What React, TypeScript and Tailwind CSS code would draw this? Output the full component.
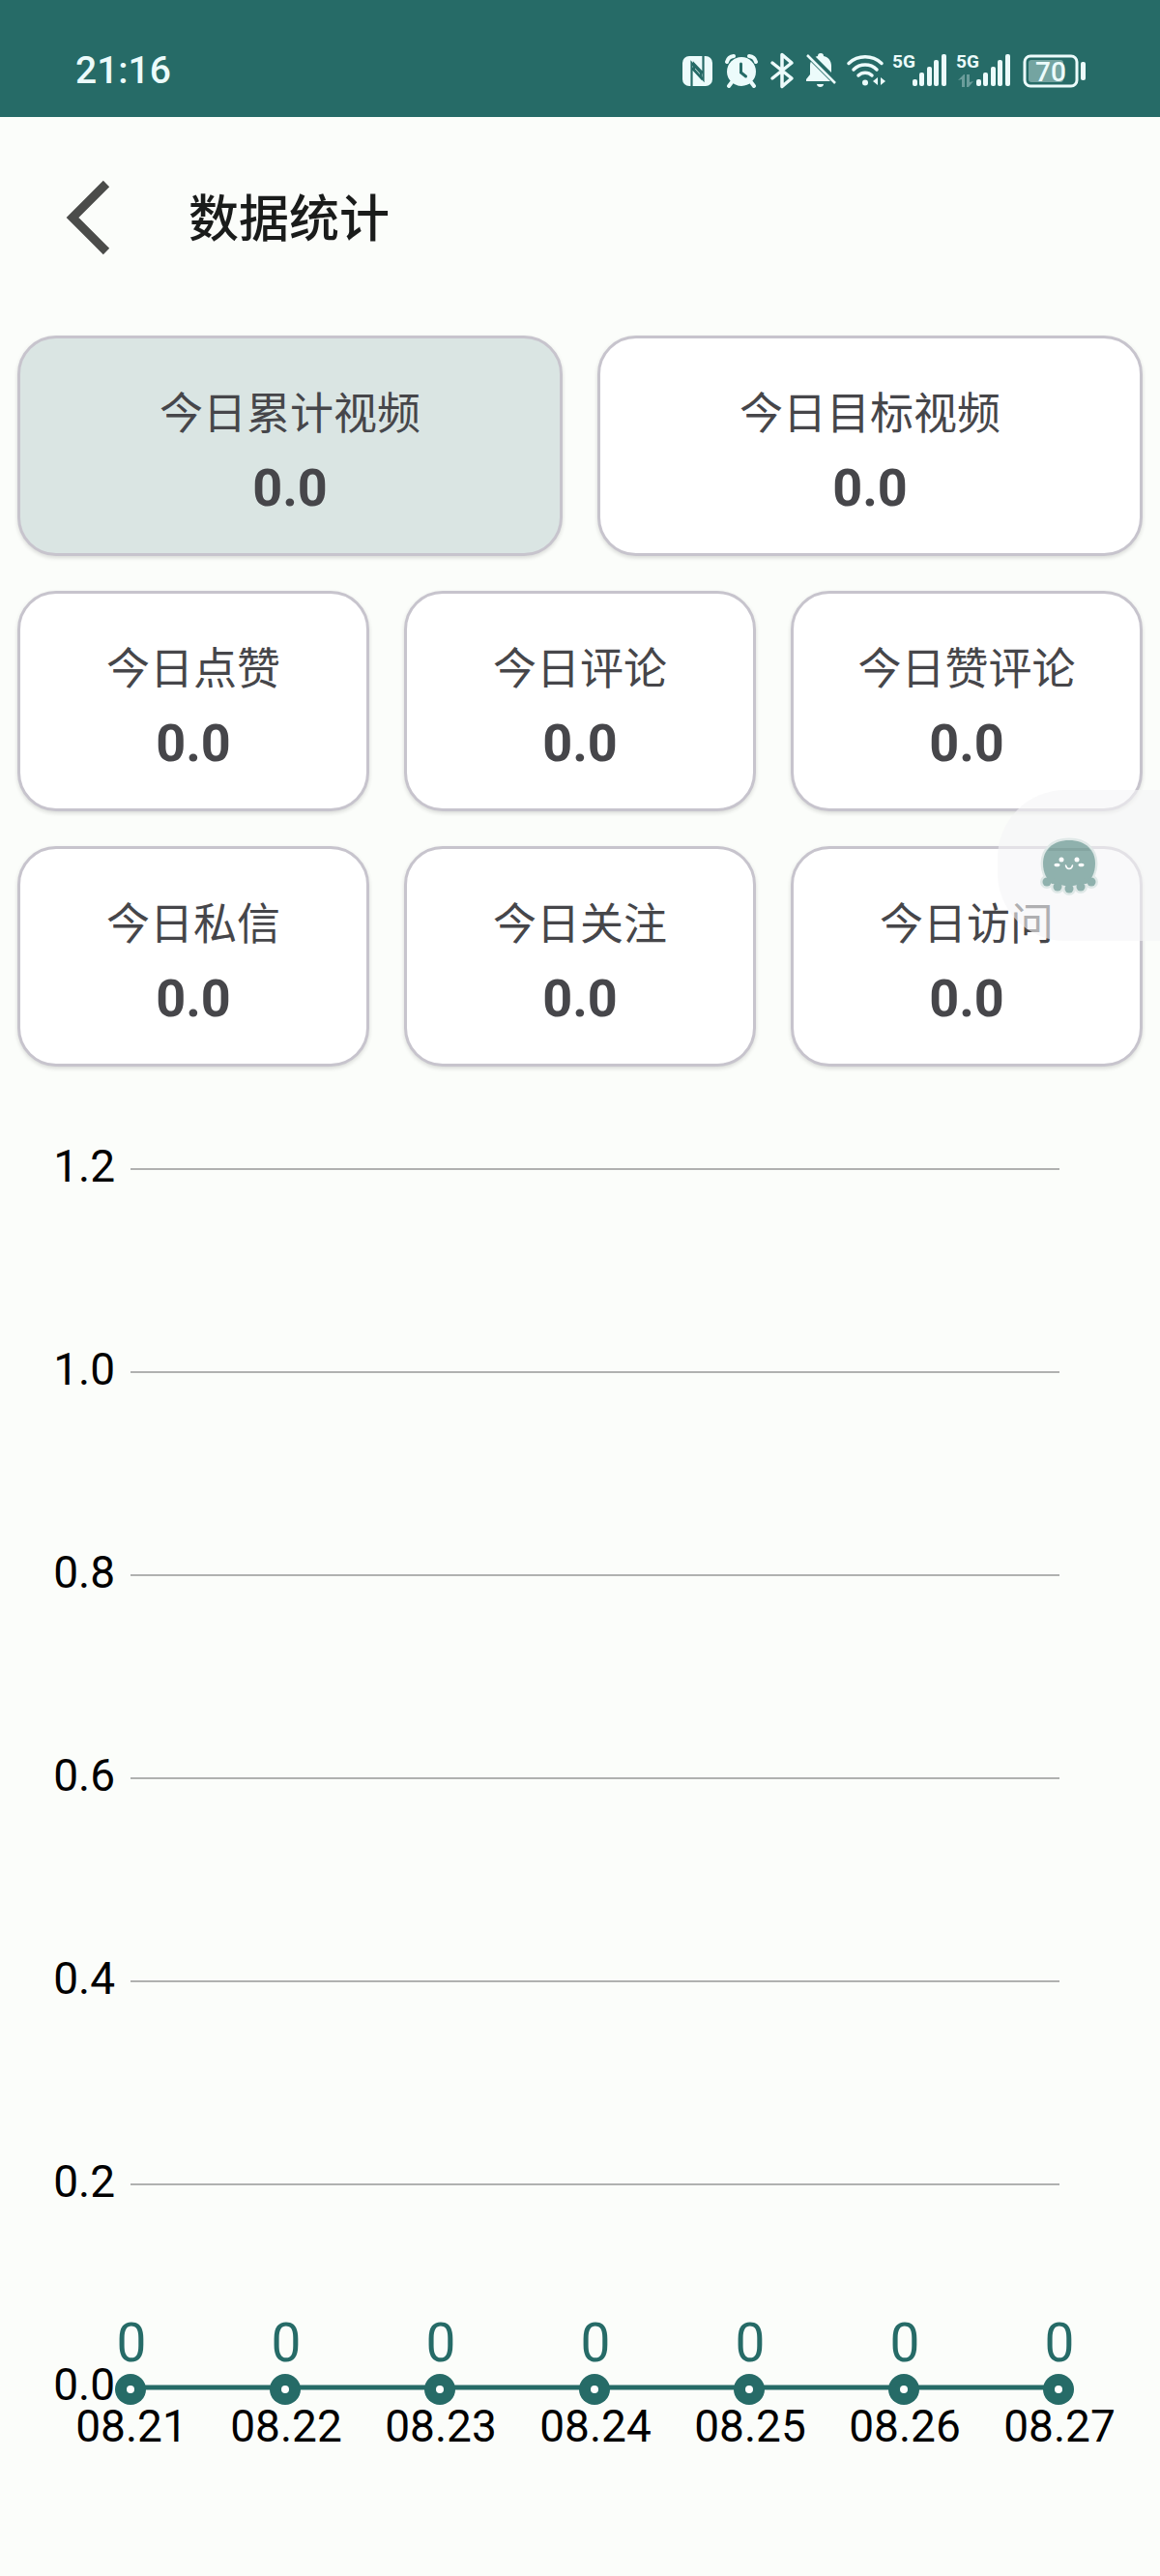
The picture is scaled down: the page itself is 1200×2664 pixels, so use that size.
import React from "react";

type Stat = { label: string; value: string; active?: boolean };

const wideStats: Stat[] = [
  { label: "今日累计视频", value: "0.0", active: true },
  { label: "今日目标视频", value: "0.0" },
];

const stats: Stat[] = [
  { label: "今日点赞", value: "0.0" },
  { label: "今日评论", value: "0.0" },
  { label: "今日赞评论", value: "0.0" },
  { label: "今日私信", value: "0.0" },
  { label: "今日关注", value: "0.0" },
  { label: "今日访问", value: "0.0" },
];

const ticks = ["1.2", "1.0", "0.8", "0.6", "0.4", "0.2", "0.0"];
const days = ["08.21", "08.22", "08.23", "08.24", "08.25", "08.26", "08.27"];

function StatCard({ label, value, active }: Stat) {
  return (
    <button
      type="button"
      className={
        "flex h-[228px] flex-col items-center rounded-[40px] border-[3px] border-[#c7c4cd] pt-12 text-[#46464a] shadow-[0_2px_4px_rgba(0,0,0,0.14)] " +
        (active ? "bg-[#dae5e3]" : "bg-white")
      }
    >
      <span className="text-[45px] leading-[62px]">{label}</span>
      <span className="mt-3 text-[54px] leading-[66px] font-bold">{value}</span>
    </button>
  );
}

function Signal({ activity }: { activity?: boolean }) {
  return (
    <svg width="54" height="36" viewBox="0 0 54 36" className="overflow-visible" fill="currentColor">
      <text x="-2" y="15" fontSize="19" fontWeight="700">5G</text>
      {activity && (
        <g opacity="0.35">
          <path d="M0 28l6-6h1v13H4v-8z" />
          <path d="M9 22h3v8l4-1-5 6H9z" />
        </g>
      )}
      <rect x="19" y="27" width="5" height="7" rx="2" />
      <rect x="26" y="20" width="5" height="14" rx="2" />
      <rect x="34" y="14" width="5" height="20" rx="2" />
      <rect x="41" y="7" width="5" height="27" rx="2" />
      <rect x="49" y="1" width="5" height="33" rx="2" />
    </svg>
  );
}

function StatusBar() {
  return (
    <div className="flex h-[121px] items-center justify-between bg-[#266b67] pr-[77px] pl-[78px] pt-[25px] text-[#ecfbfb]">
      <span className="text-[39px] leading-[48px] font-medium">21:16</span>
      <div className="flex items-center gap-3">
        <svg width="32" height="36" viewBox="0 0 32 36">
          <rect x="0" y="3" width="31" height="31" rx="7" fill="#ecfbfb" />
          <path d="M9.500 34V10L19 20.500v5L9.500 15" fill="none" stroke="#266b67" strokeWidth="2.200" />
          <path d="M21.500 3V27.500L12 17v-6l9.500 10" fill="none" stroke="#266b67" strokeWidth="2.200" />
        </svg>
        <svg width="34" height="36" viewBox="0 0 34 36" fill="none" stroke="#ecfbfb" strokeLinecap="round">
          <circle cx="17" cy="19" r="15" fill="#ecfbfb" stroke="none" />
          <path d="M2 9a8 8 0 0 1 7-6M32 9a8 8 0 0 0-7-6" strokeWidth="4" />
          <path d="M7 30l-3 4M27 30l3 4" strokeWidth="4" />
          <path d="M16.500 11v9l5 4" stroke="#266b67" strokeWidth="3" />
        </svg>
        <svg width="26" height="38" viewBox="0 0 26 38" fill="none" stroke="#ecfbfb" strokeWidth="3.500" strokeLinejoin="round" strokeLinecap="round">
          <path d="M3 11l20 16-10 8.500V2.500L23 11 3 27" />
        </svg>
        <svg width="30" height="36" viewBox="0 0 30 36" className="overflow-visible" fill="#ecfbfb">
          <path d="M15 0c2 0 3 1 3 3 5 1 8 5 8 10v9l3 5v2H0v-2l4-5v-9c0-5 3-9 8-10 0-2 1-3 3-3z" />
          <path d="M11 32h7c0 4-7 4-7 0z" />
          <path d="M0-1l31 31" stroke="#266b67" strokeWidth="7" />
          <path d="M1 2l29 29" stroke="#ecfbfb" strokeWidth="2.500" />
        </svg>
        <svg width="37" height="36" viewBox="0 0 37 36" className="overflow-visible" fill="none" stroke="#ecfbfb" strokeWidth="3.500" strokeLinecap="round">
          <path d="M2 10.500a25 25 0 0 1 34 0M7 17a17 17 0 0 1 24 0M12 23a10 10 0 0 1 14 0" />
          <circle cx="19" cy="30.500" r="3" fill="#ecfbfb" stroke="none" />
          <path d="M27 29l5-4v8zM40 29l-5-4v8z" fill="#ecfbfb" stroke="none" />
        </svg>
        <Signal />
        <Signal activity />
        <svg width="66" height="36" viewBox="0 0 66 36">
          <rect x="3" y="3" width="54" height="31" rx="6" fill="none" stroke="#ecfbfb" strokeWidth="3" />
          <rect x="7" y="7" width="36" height="23" rx="3" fill="#ecfbfb" opacity="0.4" />
          <rect x="61" y="9" width="5" height="19" rx="2" fill="#ecfbfb" />
          <text x="30" y="29" textAnchor="middle" fontSize="28" fontWeight="500" fill="#ecfbfb">70</text>
        </svg>
      </div>
    </div>
  );
}

function Chart() {
  const top = 61;
  const step = 210;
  const base = top + step * 6;
  return (
    <svg viewBox="0 0 1200 1500" className="block w-full" role="img" aria-label="每日数据折线图">
      {ticks.map((t, i) => (
        <g key={t}>
          <line x1="135" x2="1096" y1={top + i * step} y2={top + i * step} stroke="#b0b1b0" strokeWidth="2" />
          <text x="119" y={top + 13 + i * step} textAnchor="end" fontSize="46">{t}</text>
        </g>
      ))}
      <line x1="135" x2="1096" y1={base} y2={base} stroke="#266b67" strokeWidth="5" />
      {days.map((d, i) => (
        <g key={d}>
          <circle cx={135 + i * 160} cy={base + 2} r="16" fill="#266b67" />
          <circle cx={135 + i * 160} cy={base + 2} r="4" fill="#ffffff" />
          <text x={136 + i * 160} y={base - 27} textAnchor="middle" fontSize="55" fill="#266b67">0</text>
          <text x={136 + i * 160} y={base + 56} textAnchor="middle" fontSize="46">{d}</text>
        </g>
      ))}
    </svg>
  );
}

function OctopusBody() {
  return (
    <>
      <path d="M30 4C13 4 3 14 3 28c0 10 4 16 9 21h36c5-5 9-11 9-21C57 14 47 4 30 4z" />
      <circle cx="7" cy="47" r="4.500" />
      <circle cx="18" cy="52" r="4.500" />
      <circle cx="30" cy="54" r="4.500" />
      <circle cx="42" cy="52" r="4.500" />
      <circle cx="53" cy="47" r="4.500" />
      <path d="M8 43l4-2 9 9 9 2 9-2 9-9 4 2-10 6H18z" />
    </>
  );
}

function Octopus() {
  return (
    <svg width="60" height="62" viewBox="0 0 60 62" className="overflow-visible">
      <g fill="#dfe8e7" stroke="#dfe8e7" strokeWidth="5"><OctopusBody /></g>
      <g fill="#8fb1ad"><OctopusBody /></g>
      <path d="M10 12h40l2 3H8z" fill="#84a5a1" />
      <g fill="#ffffff">
        <circle cx="22" cy="24" r="2.500" />
        <circle cx="38" cy="24" r="2.500" />
        <ellipse cx="17.500" cy="29.500" rx="3" ry="1.800" />
        <ellipse cx="42.500" cy="29.500" rx="3" ry="1.800" />
      </g>
      <path d="M26.500 30c1 4.500 6 4.500 7 0" fill="none" stroke="#ffffff" strokeWidth="1.500" strokeLinecap="round" />
    </svg>
  );
}

export default function App() {
  return (
    <div className="min-h-screen bg-[#fbfdfa] font-['Roboto','Noto_Sans_CJK_SC',sans-serif] text-black">
      <StatusBar />
      <header className="flex h-[208px] items-center pl-[66px]">
        <button type="button" aria-label="返回" className="text-[#4b4c4a]">
          <svg width="50" height="80" viewBox="0 0 50 80" fill="none" stroke="currentColor" strokeWidth="9">
            <path d="M44 5L9 40l35 35" />
          </svg>
        </button>
        <h1 className="ml-[79px] pt-1.5 text-[52px] leading-[64px] font-medium text-[#1a1c1b]">数据统计</h1>
      </header>
      <main>
        <div className="relative px-[18px] pt-[18px]">
          <div className="grid grid-cols-2 gap-9">
            {wideStats.map((s) => <StatCard key={s.label} {...s} />)}
          </div>
          <div className="mt-9 grid grid-cols-3 gap-9">
            {stats.map((s) => <StatCard key={s.label} {...s} />)}
          </div>
          <button type="button" aria-label="助手" className="absolute right-0 bottom-[130px] flex h-[156px] w-[168px] rounded-l-[70px] bg-[#f5f5f7]/60 pt-12 pl-11">
            <Octopus />
          </button>
        </div>
        <section className="pt-[45px]">
          <Chart />
        </section>
      </main>
    </div>
  );
}
